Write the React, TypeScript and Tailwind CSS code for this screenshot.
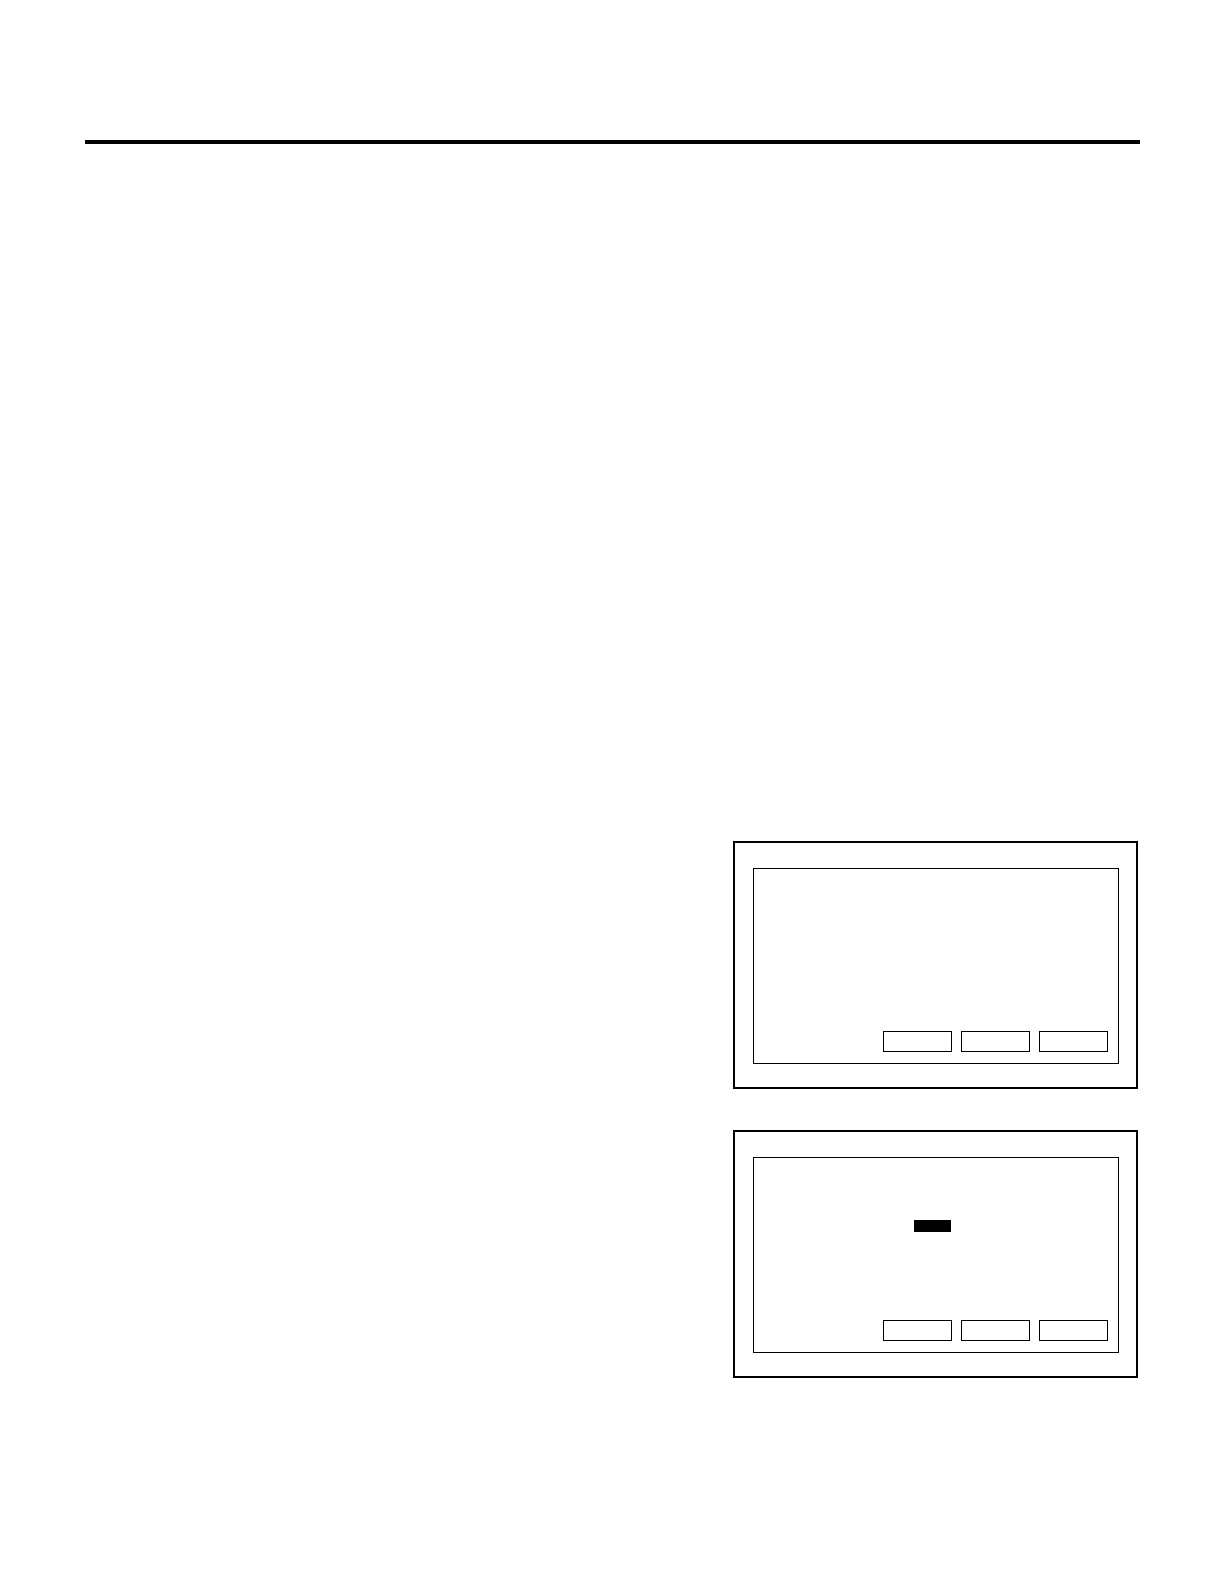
const Buttons = () => (
    <div className="mt-auto flex justify-end gap-[9px] pb-[11px] pr-[10px]">
        <div className="h-[21px] w-[69px] border-[1.5px] border-black" />
        <div className="h-[21px] w-[69px] border-[1.5px] border-black" />
        <div className="h-[21px] w-[69px] border-[1.5px] border-black" />
    </div>
);

type ScreenProps = {
    cursor?: boolean;
};

const Screen = ({ cursor }: ScreenProps) => (
    <div className="flex h-[248px] w-[405px] border-[2.5px] border-black pb-[23px] pl-[18px] pr-[17px] pt-[25px]">
        <div className="flex h-full w-full flex-col border-[1.5px] border-black">
            {cursor && <div className="ml-[160px] mt-[62px] h-[12px] w-[37px] bg-black" />}
            <Buttons />
        </div>
    </div>
);

export default function App() {
    return (
        <main className="h-[1587px] w-[1225px] bg-white pt-[140px]">
            <div className="ml-[85px] h-[4px] w-[1055px] bg-black" />

            <section className="ml-[733px] mt-[697px] flex flex-col gap-[41px]">
                <Screen />
                <Screen cursor />
            </section>
        </main>
    );
}
